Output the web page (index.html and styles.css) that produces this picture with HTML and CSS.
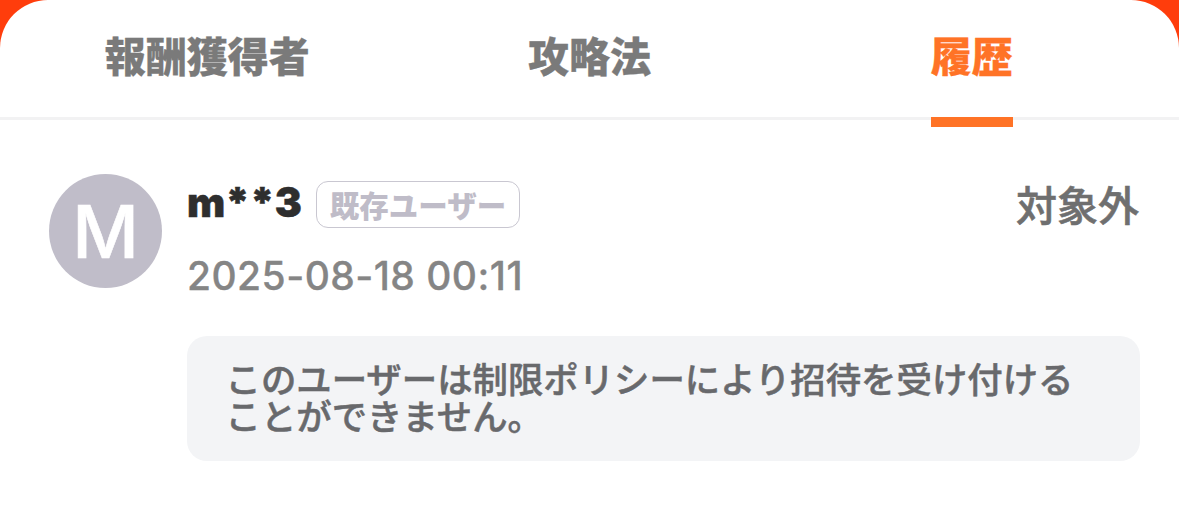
FILE: index.html
```html
<!DOCTYPE html>
<html lang="ja">
<head>
<meta charset="utf-8">
<title>履歴</title>
<link rel="stylesheet" href="styles.css">
</head>
<body>
<div class="card">
  <nav class="tabs">
    <div class="tab">報酬獲得者</div>
    <div class="tab">攻略法</div>
    <div class="tab active"><span class="tab-label">履歴</span></div>
  </nav>
  <section class="entry">
    <div class="avatar">M</div>
    <div class="content">
      <div class="head">
        <div class="who">
          <div class="name-row">
            <span class="name">m**3</span>
            <span class="badge">既存ユーザー</span>
          </div>
          <div class="date">2025-08-18 00:11</div>
        </div>
        <div class="status">対象外</div>
      </div>
      <div class="notice">このユーザーは制限ポリシーにより招待を受け付けることができません。</div>
    </div>
  </section>
</div>
</body>
</html>
```
FILE: styles.css
```css
* { box-sizing: border-box; }
html, body { margin: 0; height: 100%; }
body {
  background: #ff3d0c;
  font-family: "Inter", "Noto Sans CJK JP", sans-serif;
  overflow: hidden;
}
.card {
  height: 508px;
  background: #fff;
  border-radius: 48px 48px 0 0;
}
.tabs {
  display: grid;
  grid-template-columns: repeat(3, 1fr);
  height: 120px;
  padding: 0 16px;
  border-bottom: 3px solid #f2f2f3;
}
.tab {
  display: flex;
  justify-content: center;
  padding-top: 29px;
  font-family: "Noto Sans CJK JP", sans-serif;
  font-size: 41px;
  line-height: 50px;
  font-weight: 900;
  color: #7a7a7a;
  -webkit-text-stroke: 0.3px currentColor;
}
.tab.active { color: #ff7326; }
.tab-label { position: relative; height: 91px; }
.tab-label::after {
  content: "";
  position: absolute;
  left: 0;
  right: 0;
  top: 88px;
  height: 10px;
  background: #ff7326;
}
.entry {
  display: flex;
  gap: 25px;
  padding: 54px 39px 0 49px;
}
.avatar {
  flex: none;
  width: 113px;
  height: 114px;
  border-radius: 50%;
  background: #c0bdc9;
  color: #fff;
  font-size: 73px;
  font-weight: 500;
  display: flex;
  align-items: center;
  justify-content: center;
  -webkit-text-stroke: 0.6px currentColor;
}
.content { flex: 1; min-width: 0; }
.head { display: flex; justify-content: space-between; align-items: flex-start; }
.name-row { display: flex; align-items: center; gap: 14px; height: 60px; }
.name {
  font-size: 40.5px;
  font-weight: 900;
  color: #2e2e2e;
  line-height: 1;
  letter-spacing: 0.1px;
  margin-top: -2px;
  -webkit-text-stroke: 0.5px currentColor;
}
.badge {
  width: 204px;
  height: 47px;
  border: 1px solid #c9c7d1;
  border-radius: 12px;
  color: #bfbcc8;
  font-family: "Noto Sans CJK JP", sans-serif;
  font-size: 29.5px;
  font-weight: 900;
  line-height: 44px;
  text-align: center;
  white-space: nowrap;
}
.date {
  margin-top: 20px;
  font-size: 39px;
  line-height: 44px;
  font-weight: 500;
  letter-spacing: 0.45px;
  color: #858585;
  -webkit-text-stroke: 0.3px currentColor;
}
.status {
  margin-top: 4px;
  margin-right: 1px;
  font-family: "Noto Sans CJK JP", sans-serif;
  font-size: 41px;
  line-height: 50px;
  font-weight: 500;
  color: #6f6f6f;
  -webkit-text-stroke: 0.6px currentColor;
}
.notice {
  margin-top: 38px;
  height: 125px;
  padding: 23px 60px 0 38.5px;
  border-radius: 20px;
  background: #f3f4f6;
  font-family: "Noto Sans CJK JP", sans-serif;
  font-size: 35.4px;
  line-height: 37px;
  font-weight: 500;
  color: #68696c;
  -webkit-text-stroke: 0.5px currentColor;
}
```
